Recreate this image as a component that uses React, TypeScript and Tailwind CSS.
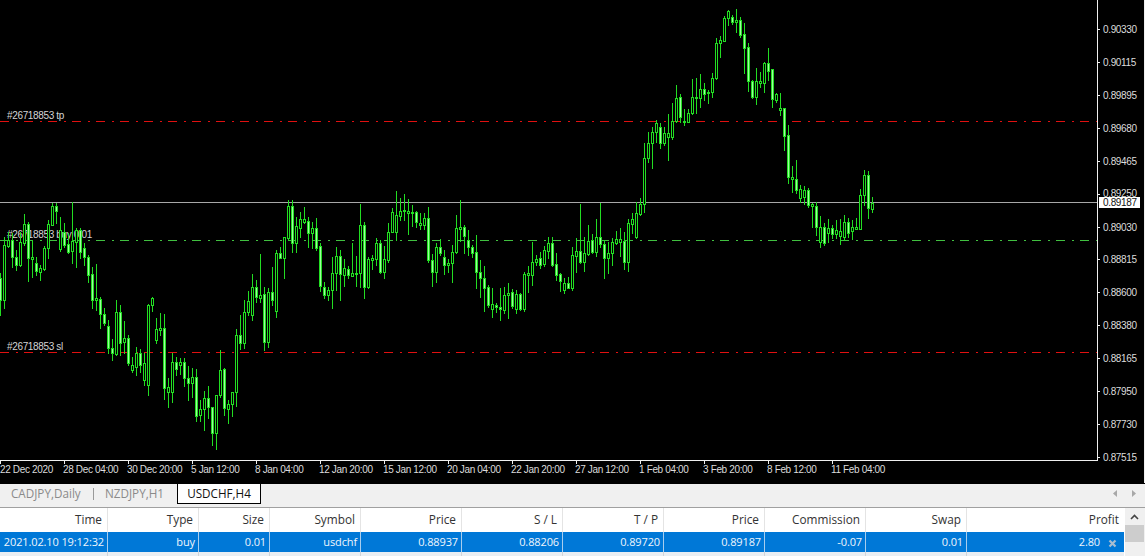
import React from "react";

// [high, bodyTop, bodyBottom, low, filled]
const C: number[][] = [
[273,278,300,315,1],[237,245,300,308,0],[232,240,246,247,0],[233,240,257,267,1],[250,257,265,270,1],[232,242,265,266,0],[214,224,243,245,0],[222,224,258,281,1],
[240,257,259,277,0],[257,263,271,275,1],[265,268,272,280,0],[246,248,269,270,0],[220,224,248,258,0],[203,206,225,225,0],[203,206,211,223,1],[217,230,249,251,0],
[223,232,245,247,1],[233,244,252,253,1],[202,241,251,263,0],[228,230,242,267,0],[228,230,252,258,1],[243,248,257,265,1],[255,257,275,282,1],[267,274,300,308,1],
[264,298,300,310,0],[297,299,314,328,1],[308,314,323,325,1],[320,326,348,353,1],[339,348,353,360,1],[300,312,354,355,0],[305,312,343,355,1],[321,338,342,353,0],
[335,338,363,365,1],[357,365,370,372,0],[347,353,367,375,0],[349,353,365,372,1],[353,363,380,385,0],[304,305,385,395,0],[297,298,305,311,0],[318,329,340,343,0],
[313,328,330,335,0],[314,328,388,399,1],[378,387,392,407,0],[353,362,392,402,0],[357,362,369,375,1],[358,362,365,374,0],[358,362,378,386,1],[366,378,383,400,1],
[368,377,383,397,0],[369,377,416,421,1],[400,409,415,421,0],[391,398,409,430,0],[386,398,407,418,1],[407,407,433,445,1],[395,395,433,449,0],[350,370,395,397,0],
[368,369,408,415,1],[400,404,409,423,0],[392,392,404,416,0],[329,335,392,406,0],[315,335,343,349,1],[300,312,343,348,0],[291,301,312,315,0],[274,287,315,320,0],
[280,287,297,302,1],[254,295,298,302,0],[287,294,342,350,1],[288,292,342,347,0],[267,292,300,305,1],[250,253,311,317,0],[247,253,258,258,1],[237,237,258,278,0],
[200,206,238,240,0],[200,206,243,252,1],[217,226,243,252,0],[212,219,228,237,0],[207,219,222,223,0],[217,221,233,247,1],[222,228,233,248,0],[218,228,248,250,1],
[243,246,286,291,1],[282,287,295,298,1],[287,290,295,300,0],[257,273,290,308,0],[247,256,273,290,0],[250,256,274,300,1],[259,268,275,286,0],[266,269,275,278,1],
[243,273,276,276,0],[256,273,274,286,0],[204,225,273,287,0],[222,225,287,298,1],[257,259,287,288,0],[255,258,260,269,0],[238,243,259,265,0],[240,243,272,273,1],
[246,259,272,278,0],[223,232,260,262,0],[208,212,232,232,0],[191,215,232,240,0],[198,211,216,220,0],[194,210,211,220,0],[199,211,213,234,0],[205,212,213,226,0],
[211,212,222,227,1],[213,223,225,229,0],[213,218,225,229,0],[207,218,260,262,1],[254,260,272,286,1],[243,247,272,282,0],[239,247,253,255,1],[250,257,265,274,1],
[259,263,265,272,0],[245,252,263,282,0],[215,228,252,253,0],[200,227,229,241,0],[225,227,236,253,1],[230,240,247,255,1],[245,247,253,257,1],[235,252,272,288,1],
[260,272,278,297,1],[266,278,288,311,1],[285,287,305,307,1],[288,304,309,317,0],[303,305,307,312,1],[288,307,309,320,1],[287,295,310,313,0],[283,293,295,318,0],
[289,292,306,308,1],[290,294,309,313,0],[293,294,309,310,1],[272,274,309,311,0],[266,273,275,292,0],[242,262,275,285,0],[255,259,262,265,0],[252,258,265,268,1],
[246,250,264,266,0],[237,243,251,258,0],[237,243,265,266,1],[253,264,275,280,1],[273,274,281,291,1],[278,283,290,293,0],[277,283,288,288,1],[247,255,288,290,0],
[238,251,256,272,0],[204,251,262,263,1],[237,253,262,271,0],[225,241,254,255,0],[234,240,252,253,1],[219,237,252,256,0],[203,237,244,247,1],[240,244,258,278,1],
[242,253,258,273,0],[238,242,253,265,0],[231,239,243,244,0],[228,239,242,256,0],[232,241,262,269,1],[219,223,262,271,0],[213,219,224,233,0],[202,213,237,238,0],
[198,204,214,215,0],[143,158,204,212,0],[132,143,158,162,0],[127,132,143,168,0],[120,123,132,142,0],[123,127,143,148,1],[127,133,143,145,0],[114,133,137,160,0],
[103,121,137,139,0],[85,98,121,122,0],[94,97,117,122,1],[109,121,122,125,0],[109,113,122,122,0],[79,97,113,114,0],[78,97,98,113,0],[74,89,98,107,0],
[83,89,94,100,1],[90,92,93,103,0],[73,78,92,97,0],[38,43,78,79,0],[36,40,43,57,0],[16,18,41,41,0],[10,11,18,25,0],[15,17,22,24,1],
[9,20,22,32,0],[17,20,35,37,1],[23,34,48,73,1],[43,47,81,91,1],[80,81,97,98,1],[68,81,97,104,0],[72,81,83,87,0],[62,63,83,92,0],
[48,63,71,80,1],[69,69,99,107,1],[93,94,100,102,0],[93,108,110,115,0],[108,108,136,150,1],[125,135,177,183,1],[166,177,179,192,0],[160,179,190,193,1],
[185,189,198,202,0],[186,190,197,204,0],[188,190,205,207,1],[203,204,206,227,0],[202,206,227,235,1],[216,227,242,247,0],[223,227,243,245,1],[219,228,233,242,0],
[225,228,234,238,1],[220,230,234,238,0],[219,231,236,244,0],[215,222,237,240,0],[218,222,233,237,1],[220,227,231,239,0],[218,227,229,229,0],[189,195,229,229,0],
[170,175,195,205,0],[171,175,208,218,1],[197,203,209,212,0],
];

const prices: [string, number][] = [
  ["0.90330", 29], ["0.90115", 62], ["0.89895", 95], ["0.89680", 128], ["0.89465", 161], ["0.89250", 194], ["0.89030", 227],
  ["0.88815", 259], ["0.88600", 292], ["0.88380", 325], ["0.88165", 358], ["0.87950", 391], ["0.87730", 424], ["0.87515", 457],
];
const times = ["22 Dec 2020", "28 Dec 04:00", "30 Dec 20:00", "5 Jan 12:00", "8 Jan 04:00", "12 Jan 20:00", "15 Jan 12:00", "20 Jan 04:00", "22 Jan 20:00", "27 Jan 12:00", "1 Feb 04:00", "3 Feb 20:00", "8 Feb 12:00", "11 Feb 04:00"];

const GREEN = "#22dd22";
const LIGHT = "#9dff9d";

function Chart() {
  return (
    <svg width={1145} height={483} className="block text-[10px] tracking-[-0.35px] [font-family:'Liberation_Sans',sans-serif]">
      <g shapeRendering="crispEdges">
        <line x1={0} x2={1097} y1={121.5} y2={121.5} stroke="#e01010" strokeDasharray="9 7 2 6" />
        <line x1={0} x2={1097} y1={352.5} y2={352.5} stroke="#e01010" strokeDasharray="9 7 2 6" />
        <line x1={0} x2={1097} y1={240.5} y2={240.5} stroke="#40c040" strokeDasharray="9 7 2 6" />
      </g>
      <g fill="#d4d4d4">
        <text x={7} y={119}>#26718853 tp</text>
        <text x={7} y={238}>#26718853 buy 0.01</text>
        <text x={7} y={350}>#26718853 sl</text>
      </g>
      <g shapeRendering="crispEdges">
        <rect x={0} y={202} width={1097} height={1} fill="#a8a8a8" />
        {C.map((c, k) => {
          const x = 4 * k;
          const [hi, top, bot, lo, f] = c;
          const h = bot - top + 1;
          return (
            <g key={k}>
              <rect x={x} y={hi} width={1} height={lo - hi + 1} fill={GREEN} />
              <rect x={x - 1} y={top} width={3} height={h} fill={GREEN} />
              {h > 2 && <rect x={x} y={top + 1} width={1} height={h - 2} fill={f ? LIGHT : "#000"} />}
            </g>
          );
        })}
      </g>
      <g shapeRendering="crispEdges">
        <rect x={1097} y={0} width={1} height={461} fill="#f0f0f0" />
        <rect x={0} y={460} width={1097} height={1} fill="#f0f0f0" />
        {prices.map(([, y]) => <rect key={y} x={1098} y={y} width={2} height={1} fill="#f0f0f0" />)}
        {times.map((_, i) => <rect key={i} x={i * 64} y={461} width={1} height={3} fill="#f0f0f0" />)}
        <rect x={1144} y={0} width={1} height={483} fill="#f0f0f0" />
      </g>
      <g fill="#dcdcdc">
        {prices.filter(([p]) => p !== "0.89250").map(([p, y]) => <text key={p} x={1103} y={y + 4}>{p}</text>)}
        <text x={1103} y={197}>0.89250</text>
        {times.map((t, i) => <text key={t} x={i === 0 ? 0 : i * 64 - 1} y={473}>{t}</text>)}
      </g>
      <rect x={1099} y={197} width={41} height={11} fill="#fff" shapeRendering="crispEdges" />
      <text x={1103} y={206} fill="#111">0.89187</text>
    </svg>
  );
}

const headers = ["Time", "Type", "Size", "Symbol", "Price", "S / L", "T / P", "Price", "Commission", "Swap", "Profit"];
const row = ["2021.02.10 19:12:32", "buy", "0.01", "usdchf", "0.88937", "0.88206", "0.89720", "0.89187", "-0.07", "0.01"];
const gridCols = "grid grid-cols-[108px_91px_71px_91px_101px_101px_101px_101px_101px_101px_157px]";

function Table() {
  return (
    <div className="flex flex-1 border-t border-[#a0a0a0] bg-white">
      <div className="w-[1124px] flex flex-col">
        <div className={`${gridCols} h-[24px] items-stretch text-[11.8px] text-[#333]`}>
          {headers.map((h, i) => (
            <div key={i} className="flex items-center justify-end whitespace-nowrap border-r border-[#e4e4e4] pr-[5px] last:border-r-0">{h}</div>
          ))}
        </div>
        <div className={`${gridCols} h-[20px] bg-[#0078d7] text-[11px] tracking-[-0.12px] text-[#f0f6fc]`}>
          {row.map((v, i) => (
            <div key={i} className="flex items-center justify-end whitespace-nowrap border-r border-[#a8cdee] pr-[3px]">{v}</div>
          ))}
          <div className="flex items-center justify-end gap-[8px] pr-[7px]">
            <span>2.80</span>
            <svg width={9} height={9} viewBox="0 0 9 9" className="mt-[2px]">
              <path d="M1.5 1.5 7.5 7.5M7.5 1.5 1.5 7.5" stroke="#a9bdd0" strokeWidth={2.2} />
            </svg>
          </div>
        </div>
        <div className={`${gridCols} flex-1 bg-[#e9eef3]`}>
          {row.map((_, i) => <div key={i} className="border-r border-[#d0d4d8]" />)}
          <div />
        </div>
      </div>
      <div className="flex-1 flex flex-col bg-[#f0f0f0] pr-[1px] border-l border-white">
        <div className="h-[17px] flex items-center justify-center">
          <svg width={9} height={6} viewBox="0 0 9 6"><path d="M1 5 4.5 1.5 8 5" fill="none" stroke="#444" strokeWidth={1.6} /></svg>
        </div>
        <div className="h-[17px] bg-[#cdcdcd]" />
      </div>
    </div>
  );
}

function TabBar() {
  return (
    <div className="h-[24px] flex items-start bg-[#f0f0f0] text-[11.7px] border-t border-black">
      <div className="w-[93px] h-[19px] flex items-center pl-[11px] text-[#8a8a8a]">CADJPY,Daily</div>
      <div className="w-px h-[12px] mt-[4px] bg-[#9a9a9a]" />
      <div className="w-[83px] h-[19px] flex items-center pl-[11px] text-[#8a8a8a]">NZDJPY,H1</div>
      <div className="w-[84px] h-[20px] flex items-center justify-center bg-white border-x border-b border-black text-[#111]">USDCHF,H4</div>
      <div className="flex-1" />
      <div className="flex items-center gap-[15px] h-[18px] pr-[9px]">
        <svg width={4} height={7} viewBox="0 0 4 7"><path d="M4 0V7L0 3.5Z" fill="#a8a8a8" /></svg>
        <svg width={4} height={7} viewBox="0 0 4 7"><path d="M0 0V7L4 3.5Z" fill="#a8a8a8" /></svg>
      </div>
    </div>
  );
}

export default function App() {
  return (
    <div className="w-[1145px] h-[556px] overflow-hidden flex flex-col bg-[#f0f0f0] [font-family:'Open_Sans',sans-serif]">
      <div className="h-[483px] bg-black shrink-0"><Chart /></div>
      <TabBar />
      <Table />
    </div>
  );
}
